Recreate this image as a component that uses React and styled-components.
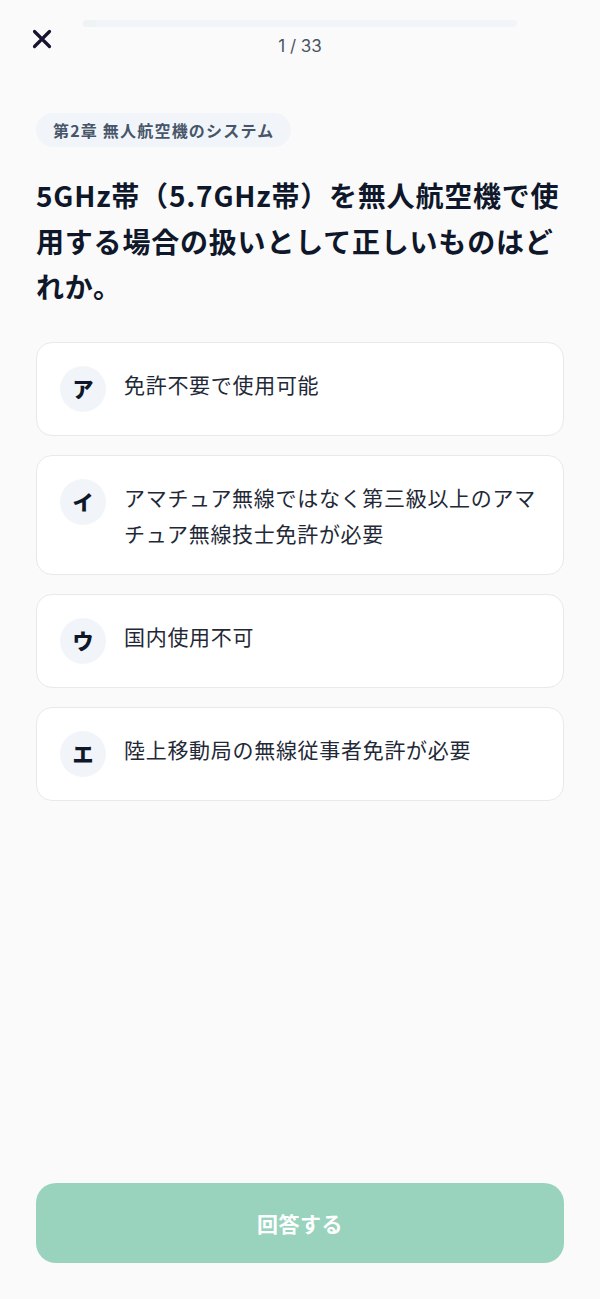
import styled, { createGlobalStyle } from "styled-components";

const GlobalStyle = createGlobalStyle`
  html, body {
    margin: 0;
    padding: 0;
    background-color: #fafafa;
  }
  body {
    font-family: "Noto Sans CJK JP", "Noto Sans", Inter, sans-serif;
    -webkit-font-smoothing: antialiased;
  }
  * {
    box-sizing: border-box;
  }
`;

// 選択肢データ
const choices = [
  { key: "ア", text: "免許不要で使用可能" },
  {
    key: "イ",
    text: "アマチュア無線ではなく第三級以上のアマチュア無線技士免許が必要",
  },
  { key: "ウ", text: "国内使用不可" },
  { key: "エ", text: "陸上移動局の無線従事者免許が必要" },
];

function CloseIcon() {
  return (
    <svg width="20" height="20" viewBox="0 0 20 20" fill="none">
      <path
        d="M2.5 2.5L17.5 17.5M17.5 2.5L2.5 17.5"
        stroke="#16142e"
        strokeWidth="3.2"
        strokeLinecap="round"
      />
    </svg>
  );
}

export default function App() {
  const current = 1;
  const total = 33;

  return (
    <>
      <GlobalStyle />
      <StPage>
        <StHeader>
          <StCloseButton type="button" aria-label="閉じる">
            <CloseIcon />
          </StCloseButton>
          <StProgressColumn>
            <StProgressTrack>
              <StProgressFill style={{ width: `${(current / total) * 100}%` }} />
            </StProgressTrack>
            <StCounter>
              {current} / {total}
            </StCounter>
          </StProgressColumn>
          <StHeaderSpacer />
        </StHeader>

        <StContent>
          <StChapter>第2章 無人航空機のシステム</StChapter>
          <StQuestion>
            5GHz帯（5.7GHz帯）を無人航空機で使用する場合の扱いとして正しいものはどれか。
          </StQuestion>

          <StChoiceList>
            {choices.map((choice) => (
              <StChoiceCard key={choice.key} type="button">
                <StChoiceBadge>{choice.key}</StChoiceBadge>
                <StChoiceText>{choice.text}</StChoiceText>
              </StChoiceCard>
            ))}
          </StChoiceList>
        </StContent>

        <StFooter>
          <StSubmitButton type="button" disabled>
            回答する
          </StSubmitButton>
        </StFooter>
      </StPage>
    </>
  );
}

const StPage = styled.div`
  min-height: 100vh;
  display: flex;
  flex-direction: column;
  background-color: #fafafa;
`;

const StHeader = styled.header`
  display: flex;
  align-items: center;
  gap: 31px;
  padding: 20px 32px 0;
`;

const StCloseButton = styled.button`
  width: 20px;
  height: 20px;
  padding: 0;
  border: none;
  background: none;
  display: flex;
  cursor: pointer;
`;

const StHeaderSpacer = styled.div`
  width: 20px;
`;

const StProgressColumn = styled.div`
  flex: 1;
  display: flex;
  flex-direction: column;
  align-items: center;
  gap: 8px;
`;

const StProgressTrack = styled.div`
  width: 100%;
  height: 7px;
  border-radius: 4px;
  background-color: #f1f4f8;
  overflow: hidden;
`;

const StProgressFill = styled.div`
  height: 100%;
  background-color: #eef3f6;
`;

const StCounter = styled.div`
  font-family: Inter, "Noto Sans", sans-serif;
  font-size: 17px;
  line-height: 22px;
  color: #4b5563;
`;

const StContent = styled.main`
  flex: 1;
  padding: 56px 36px 0;
`;

const StChapter = styled.div`
  display: inline-block;
  height: 34px;
  padding: 0 17px;
  border-radius: 17px;
  background-color: #f1f5f9;
  color: #475569;
  font-size: 16px;
  font-weight: 700;
  line-height: 34px;
  letter-spacing: 1.2px;
`;

const StQuestion = styled.h1`
  margin: 26px 0 0;
  font-size: 28px;
  font-weight: 700;
  line-height: 45.5px;
  letter-spacing: 0.8px;
  color: #0f172a;
`;

const StChoiceList = styled.div`
  display: flex;
  flex-direction: column;
  gap: 19px;
  margin-top: 32px;
`;

const StChoiceCard = styled.button`
  display: flex;
  align-items: flex-start;
  gap: 18px;
  width: 100%;
  padding: 23px 24px 23px 23px;
  border: 1px solid #e7e9ed;
  border-radius: 16px;
  background-color: #ffffff;
  text-align: left;
  font-family: inherit;
  cursor: pointer;
`;

const StChoiceBadge = styled.span`
  flex-shrink: 0;
  width: 46px;
  height: 46px;
  padding-bottom: 2px;
  border-radius: 50%;
  background-color: #f1f5f9;
  display: flex;
  align-items: center;
  justify-content: center;
  font-size: 21px;
  font-weight: 900;
  color: #0f172a;
`;

const StChoiceText = styled.span`
  padding-top: 0;
  font-size: 21px;
  line-height: 36px;
  letter-spacing: 0.7px;
  color: #1f2937;
`;

const StFooter = styled.footer`
  padding: 24px 36px 36px;
`;

const StSubmitButton = styled.button`
  width: 100%;
  height: 80px;
  border: none;
  border-radius: 20px;
  background-color: #99d3be;
  color: #ffffff;
  font-family: inherit;
  font-size: 21px;
  font-weight: 700;
  letter-spacing: 0.5px;
  cursor: default;
`;
